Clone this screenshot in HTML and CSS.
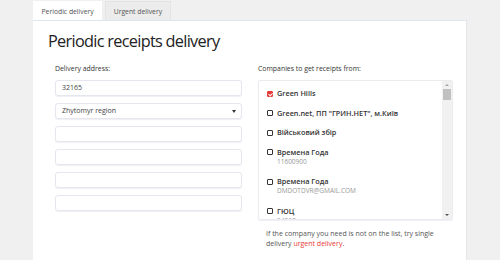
FILE: index.html
```html
<!DOCTYPE html>
<html lang="en">

<head>
    <meta charset="UTF-8">
    <meta name="viewport" content="width=device-width, initial-scale=1.0">
    <title>Periodic receipts delivery</title>
    <link rel="stylesheet" href="styles.css">
</head>

<body>

    <!-- Tabs -->
    <div class="tabs">
        <div class="tab active">Periodic delivery</div>
        <div class="tab">Urgent delivery</div>
    </div>

    <div class="card">
        <h1 class="title">Periodic receipts delivery</h1>

        <div class="cols">
            <!-- Address -->
            <div class="col col-left">
                <div class="label">Delivery address:</div>
                <div class="field">32165</div>
                <div class="field select">Zhytomyr region</div>
                <div class="field"></div>
                <div class="field"></div>
                <div class="field"></div>
                <div class="field"></div>
            </div>

            <!-- Companies -->
            <div class="col col-right">
                <div class="label">Companies to get receipts from:</div>
                <div class="list">
                    <div class="items">
                        <div class="item"><span class="box checked"></span><b>Green Hills</b></div>
                        <div class="item"><span class="box"></span><b>Green.net, ПП "ГРИН.НЕТ", м.Київ</b></div>
                        <div class="item"><span class="box"></span><b>Військовий збір</b></div>
                        <div class="item"><span class="box"></span><b>Времена Года</b>
                            <div class="sub">11600900</div>
                        </div>
                        <div class="item"><span class="box"></span><b>Времена Года</b>
                            <div class="sub">DMDOTDVR@GMAIL.COM</div>
                        </div>
                        <div class="item"><span class="box"></span><b>ГЮЦ</b>
                            <div class="sub">54217</div>
                        </div>
                    </div>
                    <!-- fake scrollbar, headless screenshots hide the real one -->
                    <div class="scrollbar">
                        <span class="arrow up"></span>
                        <span class="thumb"></span>
                        <span class="track"></span>
                        <span class="arrow down"></span>
                    </div>
                </div>
                <p class="note">If the company you need is not on the list, try single delivery <a href="#">urgent delivery</a>.</p>
            </div>
        </div>
    </div>

</body>

</html>
```

FILE: styles.css
```css
body {
    margin: 0;
    padding: 0 0 0 33px;
    background: #f0f0f0;
    font-family: "Open Sans", "Noto Sans", sans-serif;
    color: #333;
    overflow: hidden;
}

.tabs {
    display: flex;
    gap: 3px;
    padding-top: 1px;
}

.tab {
    height: 19px;
    line-height: 19px;
    padding: 0 7.5px;
    font-size: 6.8px;
    color: #555;
    background: #ececec;
    border: 1px solid #e4e4e4;
    border-bottom: none;
    box-sizing: border-box;
}

.tab.active {
    background: #fff;
    border-color: #fff;
}

.card {
    width: 434px;
    height: 240px;
    box-sizing: border-box;
    background: #fff;
    border-top: 1px solid #dde5f0;
    border-right: 1px solid #e6e6ea;
    padding: 8px 0 0 15px;
}

.title {
    margin: 0;
    font-size: 16.3px;
    letter-spacing: -0.7px;
    line-height: 24px;
    font-weight: 400;
    color: #222;
}

.cols {
    display: flex;
    gap: 16px;
    padding: 11px 0 0 7px;
}

.col-left {
    width: 187px;
    display: flex;
    flex-direction: column;
    gap: 7px;
}

.col-right {
    width: 195px;
}

.label {
    font-size: 6.9px;
    line-height: 10px;
    margin-bottom: -1px;
}

.col-right .label {
    margin-bottom: 6px;
}

.field {
    height: 16px;
    box-sizing: border-box;
    border: 1px solid #e6e6ee;
    border-radius: 3px;
    box-shadow: 0 1px 1px rgba(200, 200, 220, 0.3);
    padding: 0 6px;
    font-size: 7px;
    line-height: 14px;
    color: #444;
    position: relative;
}

.select::after {
    content: "";
    position: absolute;
    right: 5px;
    top: 6px;
    border-left: 2px solid transparent;
    border-right: 2px solid transparent;
    border-top: 3px solid #333;
}

.list {
    display: flex;
    height: 140px;
    box-sizing: border-box;
    border: 1px solid #ececf0;
    border-radius: 2px;
    box-shadow: 0 1px 1px rgba(200, 200, 220, 0.3);
}

.items {
    flex: 1;
    overflow: hidden;
    padding: 7px 0 0 8px;
}

.scrollbar {
    width: 10px;
    display: flex;
    flex-direction: column;
    align-items: center;
    background: #f1f1f1;
}

.arrow {
    height: 8px;
    width: 10px;
    display: flex;
    align-items: center;
    justify-content: center;
}

.arrow::before {
    content: "";
    border-left: 2px solid transparent;
    border-right: 2px solid transparent;
}

.arrow.up::before {
    border-bottom: 2px solid #a3a3a3;
}

.arrow.down::before {
    border-top: 2px solid #505050;
}

.thumb {
    width: 8px;
    height: 11px;
    background: #c1c1c1;
}

.track {
    flex: 1;
}

.item {
    font-size: 7.3px;
    line-height: 10px;
    margin-bottom: 9.5px;
    color: #333;
    white-space: nowrap;
}

.item b {
    font-weight: 600;
}

.box {
    display: inline-block;
    width: 6px;
    height: 6px;
    box-sizing: border-box;
    border: 1px solid #333;
    border-radius: 1px;
    margin-right: 4px;
    vertical-align: -0.5px;
}

.box.checked {
    background: #e53935;
    border-color: #e53935;
    position: relative;
}

.box.checked::after {
    content: "";
    position: absolute;
    left: 1px;
    top: 0;
    width: 2px;
    height: 3px;
    border: solid #fff;
    border-width: 0 1px 1px 0;
    transform: rotate(45deg);
}

.sub {
    padding-left: 10px;
    font-size: 6.5px;
    color: #999;
}

.note {
    margin: 9px 0 0 8px;
    font-size: 7px;
    line-height: 10px;
    color: #555;
}

.note a {
    color: #e53935;
    text-decoration: none;
}
```
